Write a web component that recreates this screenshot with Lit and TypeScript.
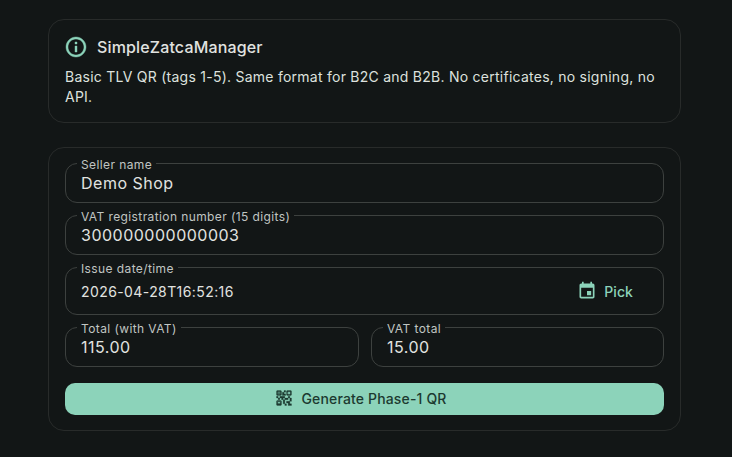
import { LitElement, html, css } from "lit";
import { customElement } from "lit/decorators.js";

@customElement("app-root")
export class AppRoot extends LitElement {
  static styles = css`
    :host {
      display: block;
      width: 732px;
      height: 457px;
      box-sizing: border-box;
      background: #121616;
      font-family: Inter, "Liberation Sans", sans-serif;
      color: #e1e3e0;
      overflow: hidden;
    }
    .page {
      display: flex;
      flex-direction: column;
      gap: 24px;
      padding: 19px 51px 0 48px;
    }
    .card {
      border: 1px solid #282b2a;
      border-radius: 16px;
      box-sizing: border-box;
    }
    .info {
      height: 104px;
      padding: 15px 16px;
    }
    .head {
      display: flex;
      align-items: center;
      gap: 9px;
      height: 24px;
      margin-bottom: 8px;
    }
    .head svg {
      width: 24px;
      height: 24px;
      margin-left: -1px;
      fill: #8cd3ba;
      stroke: #8cd3ba;
      stroke-width: 0.4;
    }
    .title {
      font-size: 16px;
      font-weight: 500;
      letter-spacing: 0.15px;
    }
    .desc {
      margin: 0;
      font-size: 14px;
      line-height: 20px;
      letter-spacing: 0.25px;
      color: #dde1de;
    }
    .form {
      height: 284px;
      padding: 15px 16px;
      display: flex;
      flex-direction: column;
      gap: 12px;
    }
    .field {
      position: relative;
      height: 40px;
      box-sizing: border-box;
      border: 1px solid #3d413f;
      border-radius: 12px;
      padding: 0 15px;
      display: flex;
      align-items: center;
      font-size: 16px;
      letter-spacing: 0.5px;
      color: #e1e3e0;
    }
    .field.tall {
      height: 48px;
      font-size: 14px;
      letter-spacing: 0.41px;
      justify-content: space-between;
    }
    .label {
      position: absolute;
      top: -6px;
      left: 11px;
      padding: 0 4px;
      background: #121616;
      font-size: 12px;
      line-height: 14px;
      letter-spacing: 0.4px;
      color: #c0c5c2;
    }
    .row {
      display: grid;
      grid-template-columns: 294px 1fr;
      gap: 12px;
    }
    .pick {
      display: flex;
      align-items: center;
      gap: 7px;
      margin-right: 15px;
      color: #8cd3ba;
      font-size: 14px;
      font-weight: 500;
      letter-spacing: 0.1px;
    }
    .pick svg {
      width: 20px;
      height: 20px;
      fill: currentColor;
    }
    .generate {
      margin-top: 4px;
      height: 32px;
      box-sizing: border-box;
      padding: 0 8px 2px 0;
      border-radius: 10px;
      background: #8cd3ba;
      color: #1c3a30;
      display: flex;
      align-items: center;
      justify-content: center;
      gap: 7px;
      font-size: 14px;
      font-weight: 500;
      letter-spacing: 0.15px;
    }
    .generate svg {
      width: 20px;
      height: 20px;
      fill: currentColor;
      stroke: currentColor;
      stroke-width: 0.3;
    }
  `;

  render() {
    return html`
      <div class="page">
        <section class="card info">
          <div class="head">
            <svg viewBox="0 0 24 24"><path d="M11 7h2v2h-2zm0 4h2v6h-2zm1-9C6.48 2 2 6.48 2 12s4.48 10 10 10 10-4.48 10-10S17.52 2 12 2zm0 18c-4.41 0-8-3.59-8-8s3.59-8 8-8 8 3.59 8 8-3.59 8-8 8z"/></svg>
            <span class="title">SimpleZatcaManager</span>
          </div>
          <p class="desc">Basic TLV QR (tags 1-5). Same format for B2C and B2B. No certificates, no signing, no API.</p>
        </section>
        <section class="card form">
          <div class="field"><span class="label">Seller name</span>Demo Shop</div>
          <div class="field"><span class="label">VAT registration number (15 digits)</span>300000000000003</div>
          <div class="field tall">
            <span class="label">Issue date/time</span>
            <span>2026-04-28T16:52:16</span>
            <span class="pick">
              <svg viewBox="0 0 24 24"><path d="M17 12h-5v5h5v-5zM16 1v2H8V1H6v2H5c-1.11 0-1.99.9-1.99 2L3 19c0 1.1.89 2 2 2h14c1.1 0 2-.9 2-2V5c0-1.1-.9-2-2-2h-1V1h-2zm3 18H5V8h14v11z"/></svg>
              Pick
            </span>
          </div>
          <div class="row">
            <div class="field"><span class="label">Total (with VAT)</span>115.00</div>
            <div class="field"><span class="label">VAT total</span>15.00</div>
          </div>
          <div class="generate">
            <svg viewBox="0 0 24 24"><path d="M15 21h-2v-2h2v2zm-2-7h-2v5h2v-5zm8-2h-2v4h2v-4zm-2-2h-2v2h2v-2zM7 12H5v2h2v-2zm-2-2H3v2h2v-2zm7-5h2V3h-2v2zm-7.5-.5v3h3v-3h-3zM8 9H4c-.55 0-1-.45-1-1V4c0-.55.45-1 1-1h4c.55 0 1 .45 1 1v4c0 .55-.45 1-1 1zm-3.5 6.5v3h3v-3h-3zM8 21H4c-.55 0-1-.45-1-1v-4c0-.55.45-1 1-1h4c.55 0 1 .45 1 1v4c0 .55-.45 1-1 1zm8.5-16.5v3h3v-3h-3zM20 9h-4c-.55 0-1-.45-1-1V4c0-.55.45-1 1-1h4c.55 0 1 .45 1 1v4c0 .55-.45 1-1 1zm-1 10v-3h-4v2h2v3h4v-2h-2zm-2-7h-4v2h4v-2zm-4-2H7v2h2v2h2v-2h2v-2zm1-1V7h-2V5h-2v4h4zM6.75 5.25h-1.5v1.5h1.5v-1.5zm0 10h-1.5v1.5h1.5v-1.5zm10-10h-1.5v1.5h1.5v-1.5z"/></svg>
            Generate Phase-1 QR
          </div>
        </section>
      </div>
    `;
  }
}
